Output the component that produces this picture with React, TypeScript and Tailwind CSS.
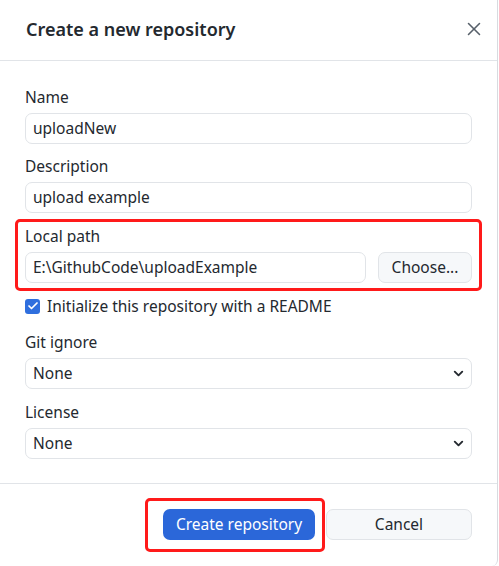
import { X, ChevronDown, Check } from 'lucide-react';

const font = { fontFamily: '"Noto Sans", "Open Sans", Arial, sans-serif' };

const Field = ({ label, value }: { label: string; value: string }) => (
    <div className="flex flex-col">
        <label className="text-[15.5px] leading-[20px] text-[#24292f]">{label}</label>
        <div className="mt-[6px] h-[31px] rounded-[7px] border border-[#e1e4e8] px-[7px] flex items-center text-[15.5px] text-[#24292f]">
            {value}
        </div>
    </div>
);

const SelectField = ({ label, value }: { label: string; value: string }) => (
    <div className="flex flex-col">
        <label className="text-[15.5px] leading-[20px] text-[#24292f]">{label}</label>
        <div className="mt-[6px] h-[31px] rounded-[7px] border border-[#e1e4e8] pl-[7px] pr-[5px] flex items-center justify-between text-[15.5px] text-[#24292f]">
            <span>{value}</span>
            <ChevronDown size={15} strokeWidth={3} className="text-[#24292f]" />
        </div>
    </div>
);

export default function App() {
    return (
        <div className="w-[499px] h-[566px] bg-white overflow-hidden" style={font}>
            <div className="w-[498px] h-[566px] border-r border-[#d8dbe0] rounded-br-[6px] flex flex-col">
                {/* Header */}
                <div className="h-[61px] border-b border-[#e1e4e8] flex items-center justify-between pl-[26px] pr-[12px] shrink-0">
                    <h1 className="text-[18px] font-semibold text-[#24292f] -mt-[1px]">Create a new repository</h1>
                    <X size={22} strokeWidth={1.7} className="text-[#57606a] -mt-[3px]" />
                </div>

                {/* Body */}
                <div className="flex-1 flex flex-col gap-[12px] pl-[25px] pr-[25px] pt-[26px]">
                    <Field label="Name" value="uploadNew" />
                    <Field label="Description" value="upload example" />

                    {/* Local path (annotated) */}
                    <div className="relative flex flex-col mt-[1px]">
                        <span className="absolute -left-[10px] -right-[10px] -top-[7px] -bottom-[8px] border-[3px] border-[#ff1a1a] rounded-[5px] pointer-events-none" />
                        <label className="block text-[15.5px] leading-[20px] text-[#24292f]">Local path</label>
                        <div className="mt-[6px] flex gap-[12px]">
                            <div className="flex-1 h-[31px] rounded-[7px] border border-[#e1e4e8] px-[7px] flex items-center text-[15.5px] text-[#24292f]">
                                E:\GithubCode\uploadExample
                            </div>
                            <button className="w-[94px] h-[31px] rounded-[7px] border border-[#e1e4e8] bg-[#f6f8fa] text-[15.5px] text-[#24292f]">
                                Choose...
                            </button>
                        </div>
                    </div>

                    <div className="flex items-center gap-[7px] mt-[1px]">
                        <span className="w-[15px] h-[15px] rounded-[3px] bg-[#2f6fde] flex items-center justify-center">
                            <Check size={12} strokeWidth={3.5} className="text-white" />
                        </span>
                        <span className="text-[15.5px] leading-[20px] text-[#24292f]">Initialize this repository with a README</span>
                    </div>

                    <div className="mt-[4px] flex flex-col gap-[13px]">
                        <SelectField label="Git ignore" value="None" />
                        <SelectField label="License" value="None" />
                    </div>
                </div>

                {/* Footer */}
                <div className="h-[83px] border-t border-[#e1e4e8] shrink-0 flex justify-end items-start pt-[25px] pr-[25px]">
                    <div className="relative mr-[11px]">
                        <span className="absolute -left-[18px] -right-[10px] -top-[11px] -bottom-[12px] border-[3px] border-[#ff1a1a] rounded-[5px] pointer-events-none" />
                        <button className="h-[31px] w-[152px] rounded-[7px] bg-[#2b67d9] text-white text-[15.5px]">
                            Create repository
                        </button>
                    </div>
                    <button className="h-[31px] w-[146px] rounded-[7px] border border-[#e1e4e8] bg-[#f6f8fa] text-[15.5px] text-[#24292f]">
                        Cancel
                    </button>
                </div>
            </div>
        </div>
    );
}
